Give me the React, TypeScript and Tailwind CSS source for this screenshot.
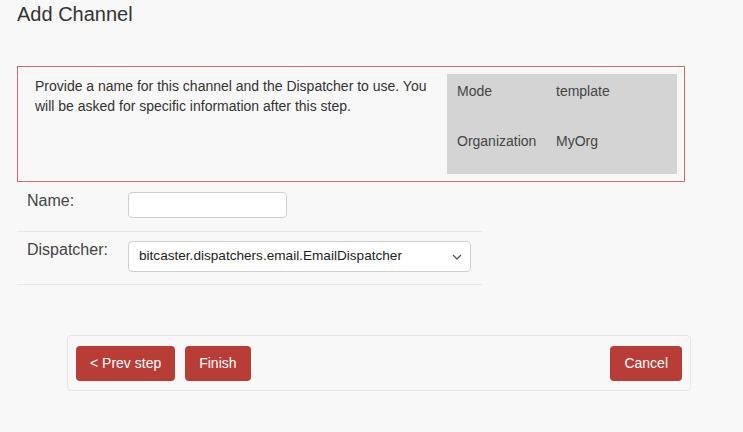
import React from "react";

const font = { fontFamily: '"Liberation Sans", Arial, sans-serif' };

const InfoPanel = () => (
  <div className="bg-[#d4d4d4] w-[230px] text-[14px] leading-[20px] text-[#444]">
    {[
      ["Mode", "template"],
      ["Organization", "MyOrg"],
    ].map(([k, v]) => (
      <div key={k} className="flex h-[50px] pt-[7px] pl-[10px]">
        <div className="w-[99px]">{k}</div>
        <div>{v}</div>
      </div>
    ))}
  </div>
);

const Btn = ({ label }: { label: string }) => (
  <button className="h-[35px] px-[14px] rounded-[4px] bg-[#b83d37] text-white text-[14px]">
    {label}
  </button>
);

export default function App() {
  return (
    <div
      className="w-[743px] h-[432px] bg-[#f8f8f8] text-[#333] overflow-hidden"
      style={font}
    >
      {/* header */}
      <h1 className="pl-[17px] pt-[2px] text-[20px] leading-[24px] text-[#333]">
        Add Channel
      </h1>

      {/* description */}
      <div className="mt-[40px] ml-[17px] w-[668px] h-[116px] border border-[#d46b6b] p-[7px] flex">
        <p className="flex-1 pl-[10px] pr-[8px] pt-[2px] text-[14px] leading-[20px] text-[#333]">
          Provide a name for this channel and the Dispatcher to use. You will
          be asked for specific information after this step.
        </p>
        <InfoPanel />
      </div>

      {/* form */}
      <div className="ml-[17px] w-[465px]">
        <div className="flex pt-[10px] pb-[13px] border-b border-[#e6e6e6]">
          <label className="w-[111px] pl-[10px] text-[16px] leading-[18px] text-[#444]">
            Name:
          </label>
          <input
            className="w-[159px] h-[26px] rounded-[4px] border border-[#cfcfcf] bg-white"
            type="text"
          />
        </div>
        <div className="flex pt-[9px] pb-[12px] border-b border-[#e6e6e6]">
          <label className="w-[111px] pl-[10px] text-[16px] leading-[18px] text-[#444]">
            Dispatcher:
          </label>
          <div className="w-[343px] h-[31px] rounded-[4px] border border-[#cfcfcf] bg-white flex items-center justify-between pl-[10px] pr-[8px] text-[13.6px] text-[#222]">
            <span>bitcaster.dispatchers.email.EmailDispatcher</span>
            <svg width="10" height="6" viewBox="0 0 10 6" fill="none">
              <path d="M1 1l4 4 4-4" stroke="#555" strokeWidth="1.3" />
            </svg>
          </div>
        </div>
      </div>

      {/* actions */}
      <div className="mt-[50px] ml-[67px] w-[624px] h-[56px] border border-[#e6e6e6] rounded-[4px] flex items-center justify-between px-[8px]">
        <div className="flex gap-[10px]">
          <Btn label="< Prev step" />
          <Btn label="Finish" />
        </div>
        <Btn label="Cancel" />
      </div>
    </div>
  );
}
